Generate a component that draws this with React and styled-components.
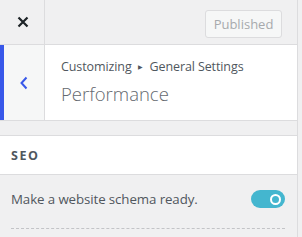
import React from "react";
import styled, { createGlobalStyle } from "styled-components";

const Global = createGlobalStyle`
  html, body { margin: 0; padding: 0; background: #f0f0f1; }
  body { font-family: "Open Sans", "Noto Sans", sans-serif; }
  * { box-sizing: border-box; }
`;

const Panel = styled.div`
  width: 298px;
  height: 237px;
  background: #f0f0f1;
  border-right: 1px solid #dcdcde;
  overflow: hidden;
`;

const Header = styled.div`
  display: flex;
  align-items: center;
  height: 45px;
  background: #f0f0f1;
  border-bottom: 1px solid #dcdcde;
`;

const CloseButton = styled.div`
  width: 45px;
  height: 44px;
  display: flex;
  align-items: center;
  justify-content: center;
  padding-left: 2px;
  border-right: 1px solid #dcdcde;
`;

const Spacer = styled.div`
  flex: 1;
`;

const PublishButton = styled.div`
  width: 77px;
  height: 28px;
  margin-right: 15px;
  margin-top: 4px;
  display: flex;
  align-items: center;
  justify-content: center;
  font-size: 13px;
  color: #a7aaad;
  background: #f6f7f7;
  border: 1px solid #dcdcde;
  border-radius: 3px;
`;

const SectionTitle = styled.div`
  display: flex;
  height: 76px;
  background: #fff;
  border-bottom: 1px solid #dcdcde;
`;

const BackButton = styled.div`
  width: 45px;
  display: flex;
  align-items: center;
  justify-content: center;
  background: #f6f7f7;
  border-left: 4px solid #3858e9;
  border-right: 1px solid #dcdcde;
`;

const TitleBlock = styled.div`
  display: flex;
  flex-direction: column;
  justify-content: center;
  padding-left: 16px;
`;

const Crumb = styled.div`
  font-size: 12.5px;
  color: #50575e;
  line-height: 18px;
  letter-spacing: -0.1px;
`;

const Arrow = styled.span`
  font-size: 6px;
  margin: 0 7px 0 6px;
  vertical-align: 2px;
`;

const Title = styled.div`
  font-size: 18.5px;
  font-weight: 300;
  color: #646970;
  line-height: 28px;
  margin-top: 4px;
`;

const GroupHeader = styled.div`
  margin-top: 14px;
  height: 40px;
  background: #fff;
  border-top: 1px solid #dcdcde;
  border-bottom: 1px solid #dcdcde;
  display: flex;
  align-items: center;
  padding-left: 11px;
  font-size: 12.5px;
  font-weight: 700;
  letter-spacing: 1.5px;
  color: #50575e;
`;

const Control = styled.div`
  margin: 0 12px 0 11px;
  padding: 15px 0 20px;
  border-bottom: 1px dashed #c3c4c7;
  display: flex;
  align-items: center;
  justify-content: space-between;
`;

const Label = styled.div`
  font-size: 13.3px;
  color: #50575e;
  letter-spacing: -0.1px;
`;

const Toggle = styled.div`
  width: 34px;
  height: 18px;
  border-radius: 9px;
  background: #44b6cf;
  display: flex;
  align-items: center;
  justify-content: flex-end;
  padding-right: 4px;
`;

const Knob = styled.div`
  width: 11px;
  height: 11px;
  border-radius: 50%;
  border: 2.5px solid #fff;
`;

export default function App() {
  return (
    <>
      <Global />
      <Panel>
        <Header>
          <CloseButton>
            <svg width="12" height="12" viewBox="0 0 12 12">
              <path d="M1.5 1.5 L10.5 10.5 M10.5 1.5 L1.5 10.5" stroke="#1d2327" strokeWidth="2.2" />
            </svg>
          </CloseButton>
          <Spacer />
          <PublishButton>Published</PublishButton>
        </Header>
        <SectionTitle>
          <BackButton>
            <svg width="10" height="14" viewBox="0 0 10 14">
              <path d="M7.5 1.5 L2.5 7 L7.5 12.5" stroke="#3858e9" strokeWidth="2" fill="none" />
            </svg>
          </BackButton>
          <TitleBlock>
            <Crumb>
              Customizing<Arrow>▶</Arrow>General Settings
            </Crumb>
            <Title>Performance</Title>
          </TitleBlock>
        </SectionTitle>
        <GroupHeader>SEO</GroupHeader>
        <Control>
          <Label>Make a website schema ready.</Label>
          <Toggle>
            <Knob />
          </Toggle>
        </Control>
      </Panel>
    </>
  );
}
